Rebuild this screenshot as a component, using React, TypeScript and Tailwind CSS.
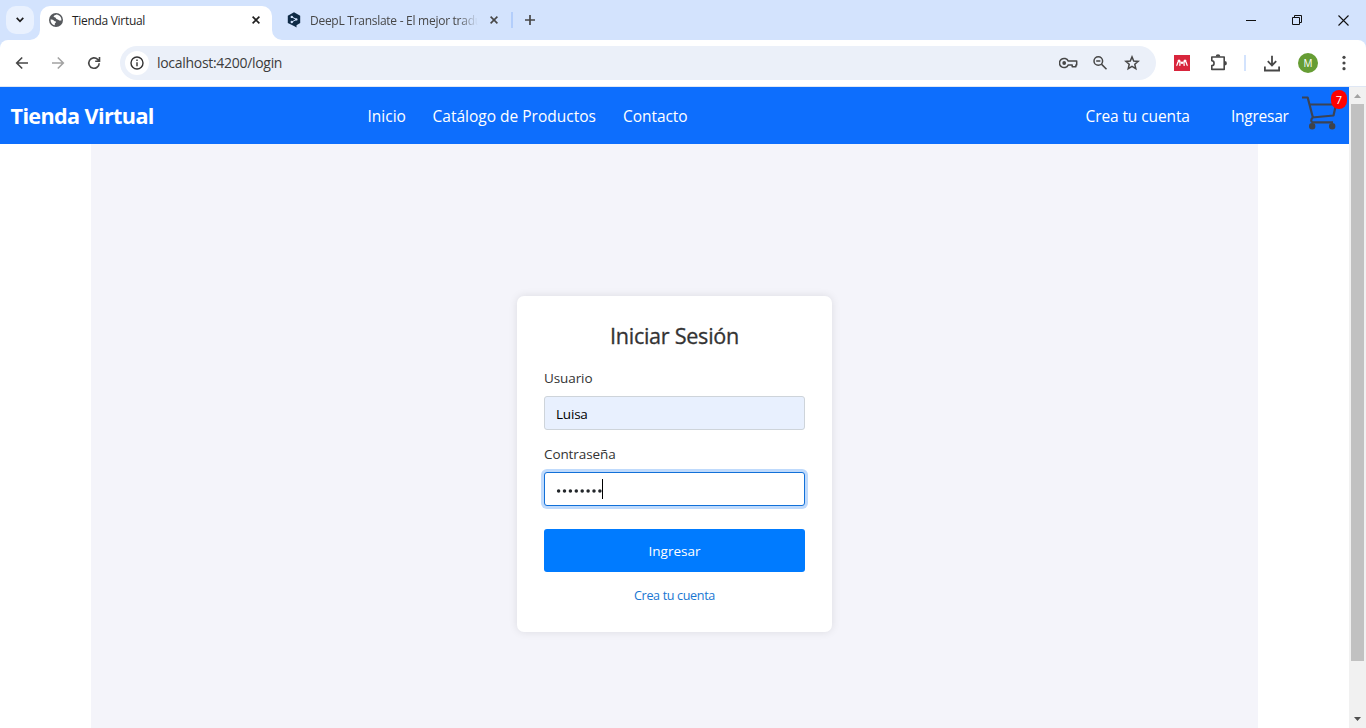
import type { ReactNode } from "react";

function Favicon() {
  return (
    <svg width="14" height="14" viewBox="0 0 14 14" className="shrink-0">
      <circle cx="7" cy="7" r="7" fill="#56595d" />
      <path d="M1.500 6.400c1.600 0 3 .4 3.600 1.300.5.8 1.900.3 1.900 1.300 0 .9-1.200.9-1.200 2v1.300C3.300 11.800 1.500 9.500 1.500 6.400zM7.400 1.600c-1 .5-2.800 1.100-2.800 2 0 .8 2 .5 2.200 1.400.2.900 1 1.300 1.900 1.500.9.200 1 1.400 3.700.9.300-2.800-1.800-5.500-5-5.800z" fill="#fff" />
    </svg>
  );
}

function DeepL() {
  return (
    <svg width="14" height="16" viewBox="0 0 14 16" className="shrink-0">
      <path d="M7 .3 13.200 3.800V11L9.500 13.200V15.600L7.500 14.300 .8 10.900V3.800z" fill="#0f2b46" />
      <path d="M4.800 4.900 9.300 7.400 4.800 10" stroke="#d3e3fd" strokeWidth="1" fill="none" />
      <circle cx="4.800" cy="4.900" r="1.200" fill="#d3e3fd" />
      <circle cx="9.300" cy="7.400" r="1.200" fill="#d3e3fd" />
      <circle cx="4.800" cy="10" r="1.200" fill="#d3e3fd" />
    </svg>
  );
}

function Close({ color }: { color: string }) {
  return (
    <svg width="8" height="8" viewBox="0 0 8 8" className="shrink-0">
      <path d="M.6.6 7.400 7.400M7.400.6.6 7.400" stroke={color} strokeWidth="1.600" />
    </svg>
  );
}

function Curve({ left }: { left?: boolean }) {
  return (
    <svg width="10" height="10" viewBox="0 0 10 10" className="shrink-0 self-end">
      <path d={left ? "M10 0V10H0A10 10 0 0 0 10 0" : "M0 0V10H10A10 10 0 0 1 0 0"} fill="#fff" />
    </svg>
  );
}

function TabStrip() {
  return (
    <div className="flex h-10 shrink-0 items-center bg-[#d3e3fd]">
      <div className="ml-1.5 flex size-7 shrink-0 items-center justify-center rounded-[10px] bg-[#e9f1fe]">
        <svg width="8" height="6" viewBox="0 0 8 6">
          <path d="M.7.9 4 4.300 7.300.9" stroke="#1f1f1f" strokeWidth="1.700" fill="none" />
        </svg>
      </div>
      <div className="-ml-1 flex h-full"><Curve left /></div>
      <div className="mt-1.5 flex h-[34px] w-[232px] shrink-0 items-center rounded-t-[10px] bg-white pb-1.5 pl-[9px] pr-[12px]">
        <Favicon />
        <span className="ml-[9px] mt-px flex-1 whitespace-nowrap text-[12px] leading-4 tracking-[-0.3px] text-[#1f1f1f]">Tienda Virtual</span>
        <Close color="#1f1f1f" />
      </div>
      <div className="flex h-full"><Curve /></div>
      <div className="ml-[5px] flex w-[211px] shrink-0 items-center">
        <DeepL />
        <span className="ml-[9px] mt-[2px] w-[172px] overflow-hidden whitespace-nowrap text-[12px] leading-4 tracking-[-0.27px] text-[#474747] [mask-image:linear-gradient(to_right,black_148px,transparent_168px)]">DeepL Translate - El mejor tradu</span>
        <div className="ml-[8px]"><Close color="#474747" /></div>
      </div>
      <div className="ml-[13px] h-4 w-[2px] bg-[#b3cefb]" />
      <svg width="10" height="10" viewBox="0 0 10 10" className="ml-[12px]">
        <path d="M5 0V10M0 5H10" stroke="#474747" strokeWidth="1.700" />
      </svg>
      <div className="ml-auto flex items-center pr-[17px]">
        <svg width="10" height="11" viewBox="0 0 10 11"><path d="M0 5.500H10" stroke="#111" /></svg>
        <svg width="10" height="10" viewBox="0 0 10 10" className="ml-[36px]">
          <path d="M.5 2.500H7.500V9.500H.5zM2.500 2.500V.5H9.500V7.500H7.500" stroke="#111" fill="none" />
        </svg>
        <svg width="11" height="11" viewBox="0 0 11 11" className="ml-[36px]">
          <path d="M.5.5 10.500 10.500M10.500.5.5 10.500" stroke="#111" strokeWidth="1.100" />
        </svg>
      </div>
    </div>
  );
}

function Icon({ className, children }: { className?: string; children: ReactNode }) {
  return (
    <svg viewBox="0 0 16 16" className={`size-4 shrink-0 ${className ?? ""}`} fill="none" stroke="#474747" strokeWidth="1.600">
      {children}
    </svg>
  );
}

function Toolbar() {
  return (
    <div className="shrink-0 bg-[#d3e3fd]">
      <div className="flex h-[47px] items-center rounded-t-lg border-b border-[#dfe7f4] bg-white">
        <Icon className="ml-[14px]">
          <path d="M14 8H3M8.200 2.500 2.700 8 8.200 13.500" />
        </Icon>
        <Icon className="ml-[20px] opacity-50">
          <path d="M2 8H13M7.800 2.500 13.300 8 7.800 13.500" />
        </Icon>
        <Icon className="ml-[20px]">
          <path d="M13.200 8.200A5.200 5.200 0 1 1 11.700 4.400L13 5.800M13.500 2V6.300H9.200" />
        </Icon>
        <div className="ml-[18px] flex h-[34px] w-[1036px] shrink-0 items-center rounded-full bg-[#ebf0f9]">
          <div className="ml-[5px] flex size-6 items-center justify-center rounded-full bg-white">
            <svg width="14" height="14" viewBox="0 0 14 14" fill="none" stroke="#333" strokeWidth="1.400">
              <circle cx="7" cy="7" r="6" />
              <path d="M7 6.200V10.300M7 3.600V5" />
            </svg>
          </div>
          <span className="ml-[8px] whitespace-nowrap text-[14px] leading-5 tracking-[-0.3px] text-[#3c3c3c]">localhost:4200/login</span>
          <svg width="19" height="12" viewBox="0 0 19 12" className="ml-auto" fill="none" stroke="#474747" strokeWidth="1.500">
            <path d="M9.300 4.100H17.700V7.900H16.900V9.700H13.200V7.900H9.300A4.600 4.600 0 1 1 9.300 4.100Z" strokeLinejoin="round" />
            <circle cx="5.200" cy="6" r="1.900" fill="#474747" stroke="none" />
          </svg>
          <svg width="16" height="16" viewBox="0 0 16 16" className="ml-[14px]" fill="none" stroke="#474747" strokeWidth="1.500">
            <circle cx="6.300" cy="6" r="4.300" />
            <path d="M9.400 9.100 14.500 14.200M4.200 6H8.400" />
          </svg>
          <svg width="16" height="16" viewBox="0 0 16 16" className="ml-[16px] mr-[16px]" fill="none" stroke="#474747" strokeWidth="1.500">
            <path d="M8 1.900 9.700 6 14.200 6.400 10.800 9.300 11.800 13.700 8 11.400 4.200 13.700 5.200 9.300 1.800 6.400 6.300 6Z" />
          </svg>
        </div>
        <svg width="16" height="16" viewBox="0 0 16 16" className="ml-[18px]">
          <rect width="16" height="16" fill="#d8253c" />
          <path d="M2.400 10.700C3.400 10.200 3.200 8.500 4 7M6 6.500C6.500 8 5.600 9 5.900 10.900M10 6.500C9.500 8 10.400 9 10.100 10.900M12 7C12.800 8.500 12.600 10.200 13.600 10.700" stroke="#fff" strokeWidth="1.300" fill="none" />
          <circle cx="5" cy="6" r="1.500" fill="#fff" />
          <circle cx="8" cy="7.800" r="1.200" fill="#fff" />
          <circle cx="11" cy="6" r="1.500" fill="#fff" />
        </svg>
        <svg width="18" height="18" viewBox="0 0 18 18" className="ml-[20px]" fill="none" stroke="#474747" strokeWidth="1.600" strokeLinejoin="round">
          <path d="M1.800 3H14.200V15.400H1.800V11.600C4.800 11.600 4.800 6.800 1.800 6.800Z" />
          <path d="M6.500 2.600A1.500 1.500 0 0 1 9.500 2.600M14.600 7.700A1.500 1.500 0 0 1 14.600 10.700" fill="#474747" />
        </svg>
        <div className="ml-[16px] h-4 w-[2px] bg-[#d3e3fd]" />
        <svg width="16" height="17" viewBox="0 0 16 17" className="ml-[18px]" fill="none" stroke="#474747" strokeWidth="1.800">
          <path d="M8 .8V10M3.800 6.200 8 10.400 12.200 6.200M.9 11.500V15.500H15.100V11.500" />
        </svg>
        <div className="ml-[18px] flex size-5 items-center justify-center rounded-full bg-[#669d34] text-[10px] leading-none text-white">M</div>
        <svg width="4" height="16" viewBox="0 0 4 16" className="ml-[24px]" fill="#474747">
          <circle cx="2" cy="2.300" r="1.600" />
          <circle cx="2" cy="8" r="1.600" />
          <circle cx="2" cy="13.700" r="1.600" />
        </svg>
      </div>
    </div>
  );
}

function Cart() {
  return (
    <div className="relative -mt-[5px] ml-[13px] h-9 w-9 shrink-0">
      <svg width="36" height="36" viewBox="0 0 36 36" fill="none" stroke="#3b4354" strokeWidth="2.200" strokeLinejoin="round">
        <path d="M0 1.500H5.700L11 22M7.300 8.500H34L31.500 19.500 10 21.500M11 21.500C8.800 22.500 8.600 26.300 11 26.300H31" />
        <circle cx="10.200" cy="30.300" r="2.500" fill="#3f434b" stroke="#3f434b" strokeWidth="1.400" />
        <circle cx="30.200" cy="30.300" r="2.500" fill="#3f434b" stroke="#3f434b" strokeWidth="1.400" />
      </svg>
      <span className="absolute -right-[9px] -top-[6px] flex h-[19px] w-4 items-center justify-center rounded-full bg-[#ff0000] text-[11px] leading-none text-white">7</span>
    </div>
  );
}

function NavBar() {
  return (
    <nav className="flex h-[57px] shrink-0 items-center whitespace-nowrap bg-[#0d6efd] pl-[10.500px] pt-[2px] text-[15.500px] text-white">
      <span className="w-[357px] text-[21.600px] font-bold tracking-[-0.62px]">Tienda Virtual</span>
      <a className="w-[65px]">Inicio</a>
      <a className="w-[190.500px]">Catálogo de Productos</a>
      <a className="tracking-[-0.05px]">Contacto</a>
      <a className="ml-auto w-[145.500px] tracking-[-0.1px]">Crea tu cuenta</a>
      <a className="w-[58px] tracking-[-0.25px]">Ingresar</a>
      <Cart />
      <div className="w-[11px] shrink-0" />
    </nav>
  );
}

function LoginCard() {
  return (
    <form className="mt-[152px] flex h-[336px] w-[315px] flex-col rounded-[7px] bg-white px-[27px] text-[#333] shadow-[0_0_9px_rgba(0,0,0,0.1)]">
      <h2 className="mt-[26px] text-center text-[21.600px] font-medium leading-7 tracking-[-0.28px] [-webkit-text-stroke:0.3px_#333]">Iniciar Sesión</h2>
      <label className="mt-[18px] text-[13.500px] leading-5 tracking-[-0.1px]">Usuario</label>
      <div className="mt-2 flex h-[34px] items-center rounded-[3px] border border-[#ced4da] bg-[#e8f0fe] px-[11px] pt-[2px] text-[13.500px] tracking-[-0.2px] text-black">Luisa</div>
      <label className="mt-[14px] text-[13.500px] leading-5 tracking-[-0.1px]">Contraseña</label>
      <div className="mt-2 flex h-[34px] items-center rounded-[3px] border border-[#1270d8] bg-white px-[11px] shadow-[0_0_0_3px_#bfdafc]">
        <svg width="46" height="4" viewBox="0 0 46 4" fill="#212529" className="mt-[3px]">
          {[2.600, 8.500, 14.400, 20.300, 26.200, 32.100, 38, 43.900].map((x) => (
            <circle key={x} cx={x} cy="2" r="1.750" />
          ))}
        </svg>
        <div className="h-5 w-px bg-black" />
      </div>
      <button type="button" className="mt-[23px] h-[43px] shrink-0 rounded-[3px] bg-[#007bff] pt-[2px] text-[13.500px] text-white">Ingresar</button>
      <a className="mt-[14px] text-center text-[12.600px] leading-5 tracking-[-0.36px] text-[#1976d2]">Crea tu cuenta</a>
    </form>
  );
}

function Scrollbar() {
  return (
    <div className="flex w-[17px] shrink-0 flex-col items-center bg-[#f1f1f1]">
      <svg width="17" height="17" viewBox="0 0 17 17"><path d="M5 11 8.500 7 12 11z" fill="#a3a3a3" /></svg>
      <div className="h-[557px] w-[13px] bg-[#c1c1c1]" />
      <svg width="17" height="17" viewBox="0 0 17 17" className="mt-auto"><path d="M5 6H12L8.500 10z" fill="#505050" /></svg>
    </div>
  );
}

export default function App() {
  return (
    <div className="flex h-[728px] w-[1366px] flex-col overflow-hidden bg-white font-['Open_Sans','Noto_Sans',sans-serif]">
      <TabStrip />
      <Toolbar />
      <div className="flex min-h-0 flex-1">
        <div className="flex min-w-0 flex-1 flex-col">
          <NavBar />
          <main className="ml-[91px] flex w-[1167px] flex-1 items-start justify-center bg-[#f4f4fa]">
            <LoginCard />
          </main>
        </div>
        <Scrollbar />
      </div>
    </div>
  );
}
